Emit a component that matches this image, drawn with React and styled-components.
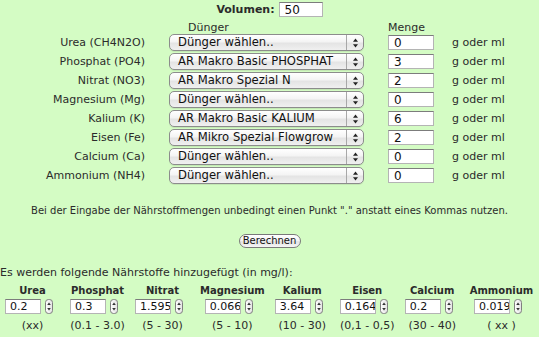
import React from 'react';
import styled, { createGlobalStyle } from 'styled-components';

const GlobalStyle = createGlobalStyle`
  html, body {
    margin: 0;
    padding: 0;
    background: #d4fcc4;
  }
  body {
    font-family: "DejaVu Sans", Verdana, sans-serif;
    font-size: 11px;
    color: #2b2b2b;
  }
`;

const Page = styled.div`
  width: 539px;
  height: 337px;
  overflow: hidden;
`;

const VolumeRow = styled.div`
  display: flex;
  justify-content: center;
  align-items: center;
  gap: 4px;
  height: 15px;
  padding-top: 2px;
  font-weight: bold;
`;

const TextField = styled.input`
  box-sizing: border-box;
  width: ${(p) => p.$w || 46}px;
  height: 15px;
  margin: 0;
  padding: 0 0 0 ${(p) => p.$pad || 5}px;
  border: 1px solid #b4b4b4;
  border-top-color: #7c7c7c;
  background: #fff;
  font-family: "DejaVu Sans", Verdana, sans-serif;
  font-size: ${(p) => p.$fs || 12}px;
  font-weight: normal;
  color: #111;
  outline: none;
`;

const FormGrid = styled.div`
  display: grid;
  grid-template-columns: 145px 195px 46px auto;
  grid-template-rows: 14px repeat(8, 17px);
  column-gap: 24px;
  row-gap: 2px;
  margin-top: 1px;
  align-items: center;
`;

const ColHead = styled.div`
  padding-left: ${(p) => p.$indent || 0}px;
  align-self: end;
  line-height: 13px;
  margin-bottom: -2px;
`;

const Label = styled.div`
  text-align: right;
`;

const Unit = styled.div`
  margin-left: -6px;
`;

const SelectBox = styled.div`
  box-sizing: border-box;
  height: 17px;
  display: flex;
  align-items: stretch;
  border: 1px solid #8c8c8c;
  border-radius: 5px;
  background: linear-gradient(#ffffff 0%, #f4f4f4 45%, #e4e4e4 55%, #f0f0f0 100%);
  box-shadow: 0 1px 0 rgba(0, 0, 0, 0.08);
  font-size: 11.6px;
  color: #111;
`;

const SelectText = styled.span`
  flex: 1;
  padding-left: 8px;
  line-height: 15px;
  white-space: nowrap;
  overflow: hidden;
`;

const SelectArrows = styled.span`
  width: 16px;
  border-left: 1px solid #a8a8a8;
  display: flex;
  align-items: center;
  justify-content: center;
`;

const Note = styled.div`
  margin-top: 20px;
  text-align: center;
  font-size: 10px;
  line-height: 13px;
`;

const ButtonRow = styled.div`
  display: flex;
  justify-content: center;
  margin-top: 17px;
`;

const PillButton = styled.button`
  box-sizing: border-box;
  width: 62px;
  height: 14px;
  padding: 0;
  border: 1px solid #7a7a7a;
  border-radius: 7px;
  background: linear-gradient(#ffffff 0%, #f2f2f2 50%, #e2e2e2 55%, #f6f6f6 100%);
  font-family: "DejaVu Sans", Verdana, sans-serif;
  font-size: 10px;
  line-height: 12px;
  color: #111;
`;

const Intro = styled.div`
  margin-top: 18px;
  line-height: 13px;
`;

const ResultRow = styled.div`
  display: flex;
  gap: 10px;
  padding-left: 5px;
  margin-top: 5px;
`;

const ResultCol = styled.div`
  min-width: 55px;
  display: flex;
  flex-direction: column;
  align-items: center;
`;

const ResultTitle = styled.div`
  font-weight: bold;
  font-size: 10px;
  line-height: 13px;
  white-space: nowrap;
`;

const StepField = styled.div`
  display: flex;
  align-items: center;
  gap: 4px;
  margin-top: 2px;
  padding-right: 7px;
`;

const Range = styled.div`
  margin-top: 5px;
  line-height: 13px;
  white-space: nowrap;
`;

const UpDown = () => (
  <svg width="7" height="10" viewBox="0 0 7 10">
    <path d="M3.5 0.5 L6 3.8 L1 3.8 Z" fill="#222" />
    <path d="M3.5 9.5 L6 6.2 L1 6.2 Z" fill="#222" />
  </svg>
);

const Stepper = () => (
  <svg width="8" height="15" viewBox="0 0 8 15">
    <defs>
      <linearGradient id="stg" x1="0" y1="0" x2="1" y2="0">
        <stop offset="0" stopColor="#ffffff" />
        <stop offset="1" stopColor="#e2e2e2" />
      </linearGradient>
    </defs>
    <rect x="0.5" y="0.5" width="7" height="14" rx="3" fill="url(#stg)" stroke="#7f7f7f" />
    <path d="M4 3.5 L5.8 6 L2.2 6 Z" fill="#333" />
    <path d="M4 11.5 L5.8 9 L2.2 9 Z" fill="#333" />
  </svg>
);

const nutrients = [
  { label: 'Urea (CH4N2O)', choice: 'Dünger wählen..', amount: '0' },
  { label: 'Phosphat (PO4)', choice: 'AR Makro Basic PHOSPHAT', amount: '3' },
  { label: 'Nitrat (NO3)', choice: 'AR Makro Spezial N', amount: '2' },
  { label: 'Magnesium (Mg)', choice: 'Dünger wählen..', amount: '0' },
  { label: 'Kalium (K)', choice: 'AR Makro Basic KALIUM', amount: '6' },
  { label: 'Eisen (Fe)', choice: 'AR Mikro Spezial Flowgrow', amount: '2' },
  { label: 'Calcium (Ca)', choice: 'Dünger wählen..', amount: '0' },
  { label: 'Ammonium (NH4)', choice: 'Dünger wählen..', amount: '0' },
];

const results = [
  { name: 'Urea', value: '0.2', range: '(xx)' },
  { name: 'Phosphat', value: '0.3', range: '(0.1 - 3.0)' },
  { name: 'Nitrat', value: '1.5957', range: '(5 - 30)' },
  { name: 'Magnesium', value: '0.0667', range: '(5 - 10)' },
  { name: 'Kalium', value: '3.64', range: '(10 - 30)' },
  { name: 'Eisen', value: '0.1648', range: '(0,1 - 0,5)' },
  { name: 'Calcium', value: '0.2', range: '(30 - 40)' },
  { name: 'Ammonium', value: '0.0192', range: '( xx )' },
];

export default function App() {
  return (
    <Page>
      <GlobalStyle />
      <VolumeRow>
        <span>Volumen:</span>
        <TextField $w={44} defaultValue="50" />
      </VolumeRow>

      <FormGrid>
        <div />
        <ColHead $indent={19}>Dünger</ColHead>
        <ColHead>Menge</ColHead>
        <div />
        {nutrients.map((n) => (
          <React.Fragment key={n.label}>
            <Label>{n.label}</Label>
            <SelectBox>
              <SelectText>{n.choice}</SelectText>
              <SelectArrows>
                <UpDown />
              </SelectArrows>
            </SelectBox>
            <TextField defaultValue={n.amount} />
            <Unit>g oder ml</Unit>
          </React.Fragment>
        ))}
      </FormGrid>

      <Note>
        Bei der Eingabe der Nährstoffmengen unbedingt einen Punkt "." anstatt eines Kommas nutzen.
      </Note>

      <ButtonRow>
        <PillButton>Berechnen</PillButton>
      </ButtonRow>

      <Intro>Es werden folgende Nährstoffe hinzugefügt (in mg/l):</Intro>

      <ResultRow>
        {results.map((r) => (
          <ResultCol key={r.name}>
            <ResultTitle>{r.name}</ResultTitle>
            <StepField>
              <TextField $w={36} $pad={4} $fs={11} defaultValue={r.value} />
              <Stepper />
            </StepField>
            <Range>{r.range}</Range>
          </ResultCol>
        ))}
      </ResultRow>
    </Page>
  );
}
